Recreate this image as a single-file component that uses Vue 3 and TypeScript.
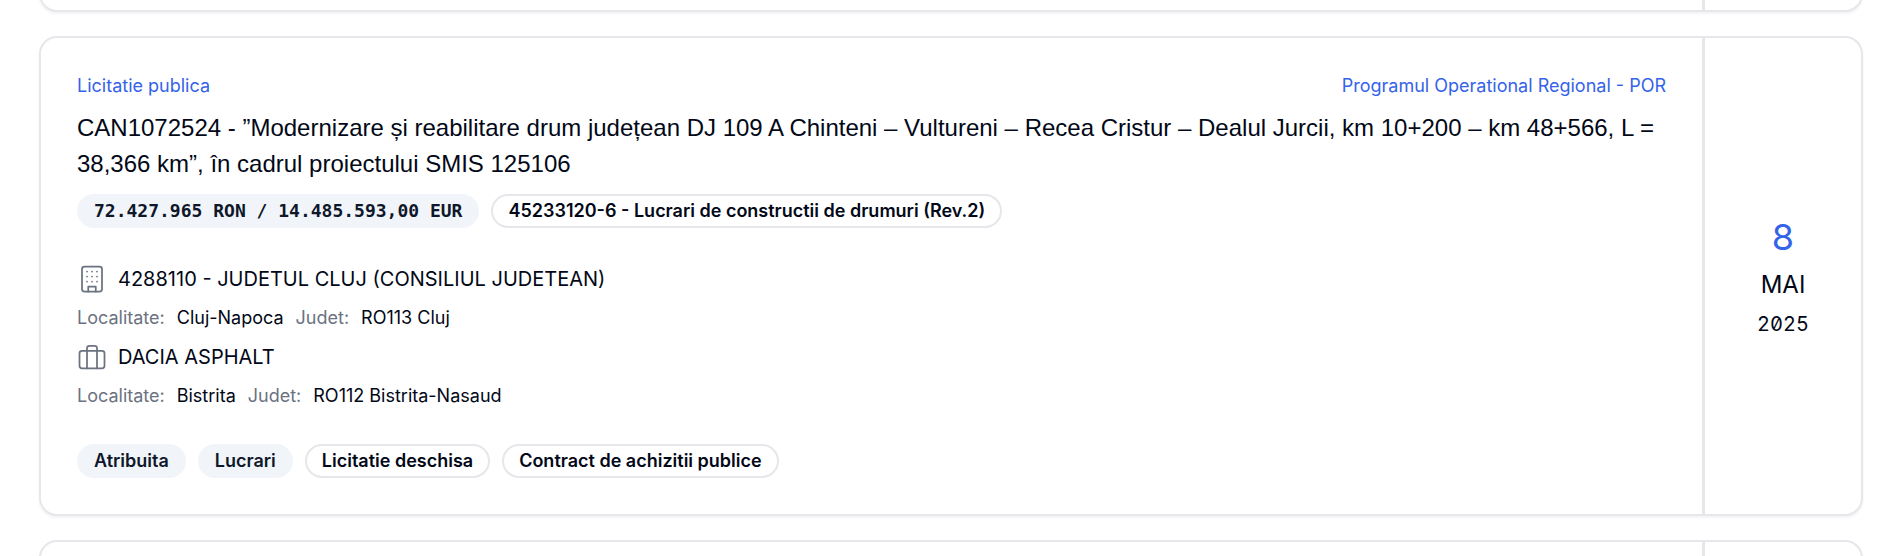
<script setup lang="ts">
interface Party {
  icon: 'building' | 'briefcase'
  name: string
  city: string
  county: string
}

interface Tag {
  label: string
  kind: 'filled' | 'outline'
  mono?: boolean
}

const procedure = 'Licitatie publica'
const programme = 'Programul Operational Regional - POR'
const title =
  'CAN1072524 - ”Modernizare și reabilitare drum județean DJ 109 A Chinteni – Vultureni – Recea Cristur – Dealul Jurcii, km 10+200 – km 48+566, L = 38,366 km”, în cadrul proiectului SMIS 125106'

const values: Tag[] = [
  { label: '72.427.965 RON / 14.485.593,00 EUR', kind: 'filled', mono: true },
  { label: '45233120-6 - Lucrari de constructii de drumuri (Rev.2)', kind: 'outline' },
]

const parties: Party[] = [
  { icon: 'building', name: '4288110 - JUDETUL CLUJ (CONSILIUL JUDETEAN)', city: 'Cluj-Napoca', county: 'RO113 Cluj' },
  { icon: 'briefcase', name: 'DACIA ASPHALT', city: 'Bistrita', county: 'RO112 Bistrita-Nasaud' },
]

const tags: Tag[] = [
  { label: 'Atribuita', kind: 'filled' },
  { label: 'Lucrari', kind: 'filled' },
  { label: 'Licitatie deschisa', kind: 'outline' },
  { label: 'Contract de achizitii publice', kind: 'outline' },
]
</script>

<template>
  <main class="list">
    <div class="card card-cut card-previous" aria-hidden="true">
      <div class="body"></div>
      <div class="date"></div>
    </div>

    <article class="card">
      <div class="body">
        <header class="meta">
          <span>{{ procedure }}</span>
          <span>{{ programme }}</span>
        </header>
        <h2 class="title">{{ title }}</h2>
        <div class="tags">
          <span v-for="tag in values" :key="tag.label" class="tag" :class="[tag.kind, { mono: tag.mono }]">{{ tag.label }}</span>
        </div>

        <div class="parties">
          <section v-for="party in parties" :key="party.name" class="party">
            <div class="party-name">
              <svg class="icon" viewBox="0 0 24 24" aria-hidden="true">
                <template v-if="party.icon === 'building'">
                  <rect x="4" y="2" width="16" height="20" rx="2" />
                  <path d="M9 22v-4h6v4M8 6h.01M12 6h.01M16 6h.01M8 10h.01M12 10h.01M16 10h.01M8 14h.01M12 14h.01M16 14h.01" />
                </template>
                <template v-else>
                  <rect x="2" y="7" width="20" height="14" rx="2" />
                  <path d="M16 21V5a2 2 0 0 0-2-2h-4a2 2 0 0 0-2 2v16" />
                </template>
              </svg>
              <span>{{ party.name }}</span>
            </div>
            <dl class="place">
              <dt>Localitate:</dt>
              <dd>{{ party.city }}</dd>
              <dt>Judet:</dt>
              <dd>{{ party.county }}</dd>
            </dl>
          </section>
        </div>

        <div class="tags">
          <span v-for="tag in tags" :key="tag.label" class="tag" :class="tag.kind">{{ tag.label }}</span>
        </div>
      </div>
      <time class="date" datetime="2025-05-08">
        <span class="day">8</span>
        <span class="month">MAI</span>
        <span class="year">2025</span>
      </time>
    </article>

    <div class="card card-cut" aria-hidden="true">
      <div class="body"></div>
      <div class="date"></div>
    </div>
  </main>
</template>

<style>
body {
  margin: 0;
  background: #fff;
}
</style>

<style scoped>
.list {
  display: flex;
  flex-direction: column;
  gap: 24px;
  height: 100vh;
  overflow: hidden;
  box-sizing: border-box;
  padding: 0 29px 0 39px;
  color: #020817;
  font-family: Inter, "Liberation Sans", sans-serif;
  font-size: 18px;
  line-height: 24px;
}

.card {
  display: flex;
  flex-shrink: 0;
  box-sizing: border-box;
  border: 2px solid #e5e7eb;
  border-radius: 18px;
  background: #fff;
  box-shadow: 0 2px 3px rgb(0 0 0 / 5%);
}

.card-cut {
  height: 60px;
}

.card-previous {
  margin-top: -48px;
}

.body {
  flex: 1;
  min-width: 0;
  padding: 0 36px;
}

article .body {
  padding: 36px;
}

.date {
  display: flex;
  flex-direction: column;
  align-items: center;
  justify-content: center;
  box-sizing: border-box;
  width: 159px;
  border-left: 3px solid #e5e7eb;
}

.meta {
  display: flex;
  justify-content: space-between;
  color: #3563e9;
}

.title {
  margin: 12px 0;
  font-family: "Liberation Sans", Arial, sans-serif;
  font-size: 24px;
  font-weight: 400;
  line-height: 36px;
}

.tags {
  display: flex;
  flex-wrap: wrap;
  gap: 12px;
}

.tag {
  padding: 3px 15px;
  border: 2px solid #e5e7eb;
  border-radius: 17px;
  font-weight: 600;
}

.filled {
  border-color: #f1f5f9;
  background: #f1f5f9;
  color: #0f172a;
}

.mono {
  font-family: "DejaVu Sans Mono", monospace;
}

.parties {
  display: flex;
  flex-direction: column;
  gap: 12px;
  margin: 36px 0;
}

.party {
  display: flex;
  flex-direction: column;
  gap: 12px;
}

.party-name {
  display: flex;
  align-items: center;
  gap: 11px;
  font-size: 20px;
  line-height: 30px;
}

.icon {
  width: 30px;
  height: 30px;
  fill: none;
  stroke: #6b7280;
  stroke-width: 1.4;
  stroke-linecap: round;
  stroke-linejoin: round;
}

.place {
  display: flex;
  gap: 12px;
  margin: 0;
}

dt {
  color: #6b7280;
}

dd {
  margin: 0;
}

.day {
  color: #3563e9;
  font-size: 36px;
  line-height: 54px;
}

.month {
  font-size: 24px;
  line-height: 42px;
}

.year {
  font-size: 20px;
  line-height: 36px;
  font-feature-settings: "zero", "tnum";
}
</style>
